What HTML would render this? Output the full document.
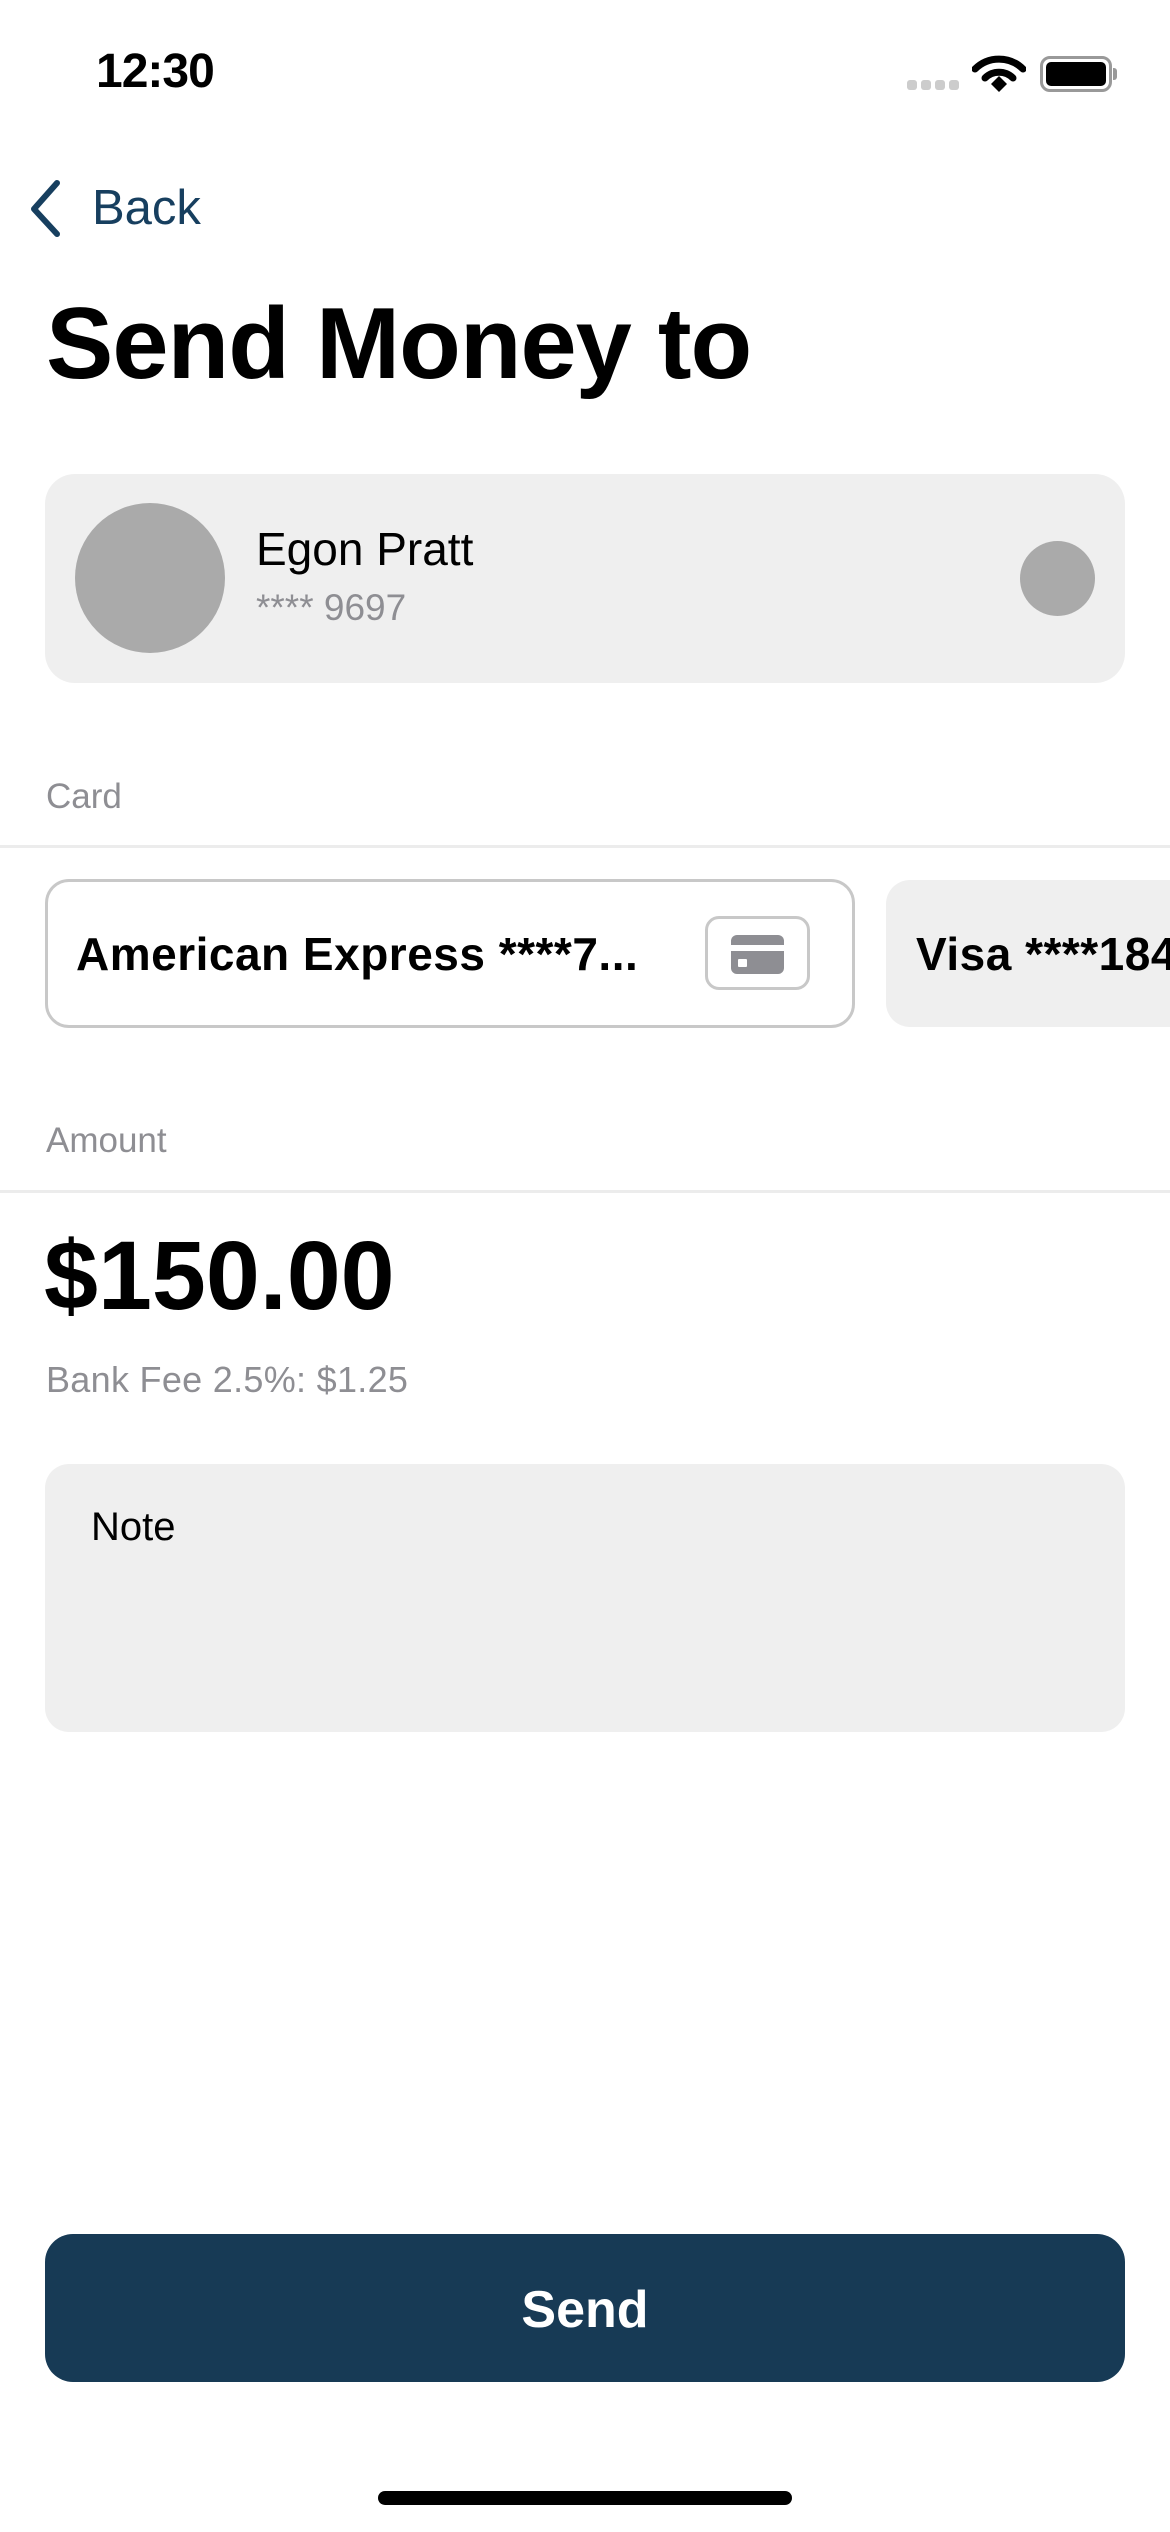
<!DOCTYPE html>
<html><head><meta charset="utf-8"><style>
*{margin:0;padding:0;box-sizing:border-box}
body{width:1170px;height:2532px;background:#fff;font-family:"Liberation Sans",sans-serif;position:relative;overflow:hidden}
.a{position:absolute;white-space:nowrap}
</style></head><body>
<div class="a" style="left:96px;top:43px;font-size:48px;font-weight:bold;line-height:58px;letter-spacing:-1px">12:30</div>
<div class="a" style="left:907px;top:80px;width:10px;height:10px;border-radius:3px;background:#ccc"></div>
<div class="a" style="left:921px;top:80px;width:10px;height:10px;border-radius:3px;background:#ccc"></div>
<div class="a" style="left:935px;top:80px;width:10px;height:10px;border-radius:3px;background:#ccc"></div>
<div class="a" style="left:949px;top:80px;width:10px;height:10px;border-radius:3px;background:#ccc"></div>
<svg class="a" style="left:972px;top:55px" width="54" height="38" viewBox="0 0 54 38"><path d="M3 14 A34 34 0 0 1 51 14" stroke="#000" stroke-width="7" fill="none" stroke-linecap="round"/><path d="M13 23 A20 20 0 0 1 41 23" stroke="#000" stroke-width="7" fill="none" stroke-linecap="round"/><path d="M19 29 L27 21 L35 29 L27 37 Z" fill="#000"/></svg>
<div class="a" style="left:1040px;top:56px;width:72px;height:36px;border:3px solid #999;border-radius:10px"></div>
<div class="a" style="left:1046px;top:62px;width:60px;height:24px;background:#000;border-radius:5px"></div>
<div class="a" style="left:1113px;top:68px;width:4px;height:12px;background:#999;border-radius:0 3px 3px 0"></div>
<svg class="a" style="left:24px;top:178px" width="42" height="60" viewBox="0 0 42 60"><path d="M33 5 L10 31 L33 56" stroke="#173f5f" stroke-width="6" fill="none" stroke-linecap="round" stroke-linejoin="round"/></svg>
<div class="a" style="left:92px;top:180px;font-size:49px;line-height:56px;color:#173f5f">Back</div>
<div class="a" style="left:46px;top:284px;font-size:101px;font-weight:bold;line-height:120px;letter-spacing:-1px">Send Money to</div>
<div class="a" style="left:45px;top:474px;width:1080px;height:209px;background:#efefef;border-radius:30px"></div>
<div class="a" style="left:75px;top:503px;width:150px;height:150px;border-radius:50%;background:#aaa"></div>
<div class="a" style="left:256px;top:522px;font-size:46px;line-height:54px">Egon Pratt</div>
<div class="a" style="left:256px;top:586px;font-size:37px;line-height:44px;color:#8e8e93">**** 9697</div>
<div class="a" style="left:1020px;top:541px;width:75px;height:75px;border-radius:50%;background:#aaa"></div>
<div class="a" style="left:46px;top:776px;font-size:35px;line-height:42px;color:#8e8e93">Card</div>
<div class="a" style="left:0;top:845px;width:1170px;height:3px;background:#ececec"></div>
<div class="a" style="left:45px;top:879px;width:810px;height:149px;border:3px solid #c8c8c8;border-radius:24px"></div>
<div class="a" style="left:76px;top:926px;font-size:46px;font-weight:bold;line-height:56px;letter-spacing:0.5px">American Express ****7...</div>
<div class="a" style="left:705px;top:916px;width:105px;height:74px;border:3px solid #c8c8c8;border-radius:14px"></div>
<div class="a" style="left:731px;top:935px;width:53px;height:39px;background:#8e8e93;border-radius:6px"></div>
<div class="a" style="left:731px;top:945px;width:53px;height:6px;background:#fff"></div>
<div class="a" style="left:738px;top:959px;width:9px;height:8px;background:#fff;border-radius:1px"></div>
<div class="a" style="left:886px;top:880px;width:400px;height:147px;background:#efefef;border-radius:24px"></div>
<div class="a" style="left:916px;top:926px;font-size:46px;font-weight:bold;line-height:56px;letter-spacing:0.5px">Visa ****1842</div>
<div class="a" style="left:46px;top:1120px;font-size:35px;line-height:42px;color:#8e8e93">Amount</div>
<div class="a" style="left:0;top:1190px;width:1170px;height:3px;background:#ececec"></div>
<div class="a" style="left:44px;top:1220px;font-size:97px;font-weight:bold;line-height:112px">$150.00</div>
<div class="a" style="left:46px;top:1359px;font-size:36px;line-height:42px;color:#8e8e93;letter-spacing:0.3px">Bank Fee 2.5%: $1.25</div>
<div class="a" style="left:45px;top:1464px;width:1080px;height:268px;background:#efefef;border-radius:24px"></div>
<div class="a" style="left:91px;top:1503px;font-size:40px;line-height:48px">Note</div>
<div class="a" style="left:45px;top:2234px;width:1080px;height:148px;background:#173a55;border-radius:28px"></div>
<div class="a" style="left:45px;top:2280px;width:1080px;text-align:center;font-size:52px;font-weight:bold;line-height:60px;color:#fff">Send</div>
<div class="a" style="left:378px;top:2491px;width:414px;height:14px;background:#000;border-radius:7px"></div>
</body></html>
